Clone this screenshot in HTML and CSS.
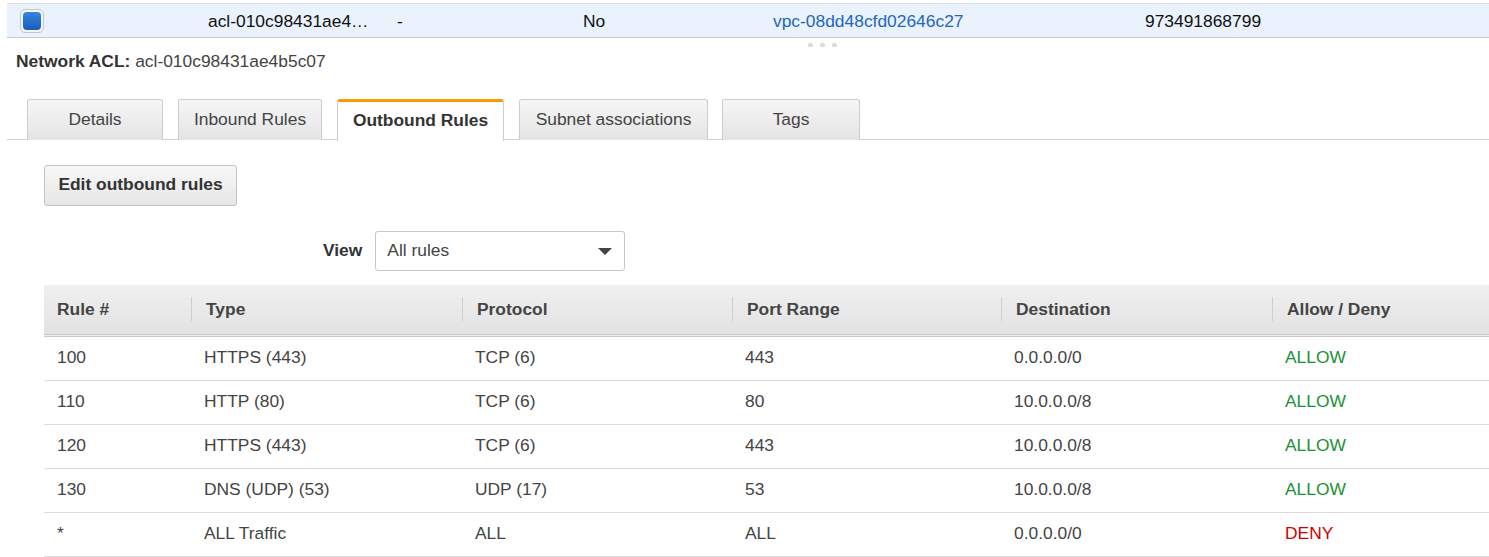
FILE: index.html
```html
<!DOCTYPE html>
<html>
<head>
<meta charset="utf-8">
<link rel="stylesheet" href="styles.css">
</head>
<body>
<div class="top-row">
  <div class="cell cell-check"><span class="checkbox"><span class="checkbox-fill"></span></span></div>
  <div class="cell">acl-010c98431ae4…</div>
  <div class="cell">-</div>
  <div class="cell">No</div>
  <div class="cell link">vpc-08dd48cfd02646c27</div>
  <div class="cell">973491868799</div>
</div>
<div class="grip"><span></span><span></span><span></span></div>
<div class="acl-title"><b>Network ACL:</b> acl-010c98431ae4b5c07</div>
<div class="tabs">
  <div class="tab tab-details">Details</div>
  <div class="tab tab-inbound">Inbound Rules</div>
  <div class="tab tab-outbound active">Outbound Rules</div>
  <div class="tab tab-subnet">Subnet associations</div>
  <div class="tab tab-tags">Tags</div>
</div>
<div class="panel">
  <button class="btn">Edit outbound rules</button>
  <div class="view-row">
    <span class="view-label">View</span>
    <div class="select"><span>All rules</span><span class="caret"></span></div>
  </div>
  <div class="table">
    <div class="thead">
      <div class="th">Rule #</div>
      <div class="th"><span class="sep">Type</span></div>
      <div class="th"><span class="sep">Protocol</span></div>
      <div class="th"><span class="sep">Port Range</span></div>
      <div class="th"><span class="sep">Destination</span></div>
      <div class="th"><span class="sep">Allow / Deny</span></div>
    </div>
    <div class="tr"><div class="td">100</div><div class="td">HTTPS (443)</div><div class="td">TCP (6)</div><div class="td">443</div><div class="td">0.0.0.0/0</div><div class="td allow">ALLOW</div></div>
    <div class="tr"><div class="td">110</div><div class="td">HTTP (80)</div><div class="td">TCP (6)</div><div class="td">80</div><div class="td">10.0.0.0/8</div><div class="td allow">ALLOW</div></div>
    <div class="tr"><div class="td">120</div><div class="td">HTTPS (443)</div><div class="td">TCP (6)</div><div class="td">443</div><div class="td">10.0.0.0/8</div><div class="td allow">ALLOW</div></div>
    <div class="tr"><div class="td">130</div><div class="td">DNS (UDP) (53)</div><div class="td">UDP (17)</div><div class="td">53</div><div class="td">10.0.0.0/8</div><div class="td allow">ALLOW</div></div>
    <div class="tr"><div class="td">*</div><div class="td">ALL Traffic</div><div class="td">ALL</div><div class="td">ALL</div><div class="td">0.0.0.0/0</div><div class="td deny">DENY</div></div>
  </div>
</div>
</body>
</html>
```
FILE: styles.css
```css
* { box-sizing: border-box; }
html, body { margin: 0; padding: 0; background: #fff; overflow: hidden; }
body {
  font-family: "Liberation Sans", Arial, sans-serif;
  font-size: 17.4px;
  line-height: 20px;
  color: #444;
  width: 1489px;
}
.top-row {
  margin: 3px 0 0 7px;
  height: 35px;
  background: #eaf2fd;
  border-top: 1px solid #dde2e8;
  border-bottom: 1px solid #c9c9c9;
  display: grid;
  grid-template-columns: 201px 189px 186px 190px 372px 1fr;
  align-items: center;
  color: #111;
}
.cell { white-space: nowrap; }
.cell-check { padding-left: 13px; display: flex; align-items: center; }
.checkbox {
  width: 24px; height: 24px;
  border: 1px solid #c8c8c8;
  border-radius: 5px;
  background: #f4f4f4;
  display: flex; align-items: center; justify-content: center;
}
.checkbox-fill {
  width: 18px; height: 18px;
  border-radius: 4px;
  background: linear-gradient(#3484de, #1a5fba);
}
.link { color: #1f66c1; }
.grip {
  display: flex; justify-content: center; gap: 7px;
  padding-left: 155px;
  height: 8px; align-items: center;
  margin-top: 3px;
}
.grip span {
  width: 5px; height: 4px;
  border-radius: 2px 2px 1px 1px;
  background: #dcdcdc;
}
.acl-title {
  margin: 2px 0 0 16px;
  color: #444;
  line-height: 20px;
}
.acl-title b { color: #333; }
.tabs {
  margin: 28px 0 0 7px;
  padding-left: 20px;
  display: flex;
  gap: 15px;
  border-bottom: 1px solid #cfcfcf;
  height: 41px;
}
.tab {
  height: 41px;
  border: 1px solid #cdcdcd;
  border-bottom: none;
  border-radius: 3px 3px 0 0;
  background: linear-gradient(#f6f6f6, #e4e4e4);
  display: flex; align-items: center; justify-content: center;
  color: #444;
  padding-bottom: 3px;
  white-space: nowrap;
}
.tab-details { width: 136px; }
.tab-inbound { width: 144px; }
.tab-outbound { width: 167px; }
.tab-subnet { width: 189px; }
.tab-tags { width: 138px; margin-left: -1px; }
.tab.active {
  background: #fff;
  border-top: 3px solid #ff9900;
  height: 42px;
  font-weight: bold;
  color: #333;
  padding-bottom: 3px;
}
.panel { padding: 25px 0 0 44px; }
.btn {
  font-family: inherit;
  font-size: 17.4px;
  font-weight: bold;
  color: #333;
  width: 193px; height: 41px;
  border: 1px solid #c3c3c3;
  border-radius: 3px;
  background: linear-gradient(#f8f8f8, #e6e6e6);
  padding: 0 0 2px;
  display: block;
  white-space: nowrap;
}
.view-row {
  margin-top: 25px;
  display: flex; align-items: center;
  padding-left: 279px;
  gap: 13px;
}
.view-label { font-weight: bold; color: #333; padding-bottom: 2px; }
.select {
  width: 250px; height: 40px;
  border: 1px solid #c6c6c6;
  border-radius: 3px;
  display: flex; align-items: center; justify-content: space-between;
  padding: 0 12px 2px 11px;
  color: #444;
}
.caret {
  width: 0; height: 0;
  border-left: 7px solid transparent;
  border-right: 7px solid transparent;
  border-top: 7px solid #444;
  margin-top: 2px;
}
.table { margin-top: 14px; width: 1445px; }
.thead, .tr {
  display: grid;
  grid-template-columns: 147px 271px 270px 269px 271px 217px;
}
.thead {
  height: 52px;
  background: linear-gradient(#f0f0f0, #e2e2e2);
  border-bottom: 3px double #c8c8c8;
  align-items: center;
  font-weight: bold;
  color: #444;
  padding-bottom: 2px;
}
.th { padding-left: 13px; }
.th:not(:first-child) { padding-left: 0; }
.sep {
  display: block;
  border-left: 1px solid #cfcfcf;
  padding-left: 14px;
  line-height: 24px;
}
.tr {
  height: 44px;
  border-bottom: 1px solid #dcdcdc;
  align-items: center;
  padding-bottom: 4px;
}
.td { padding-left: 13px; }
.allow { color: #1a9034; }
.deny { color: #d10000; }
```
